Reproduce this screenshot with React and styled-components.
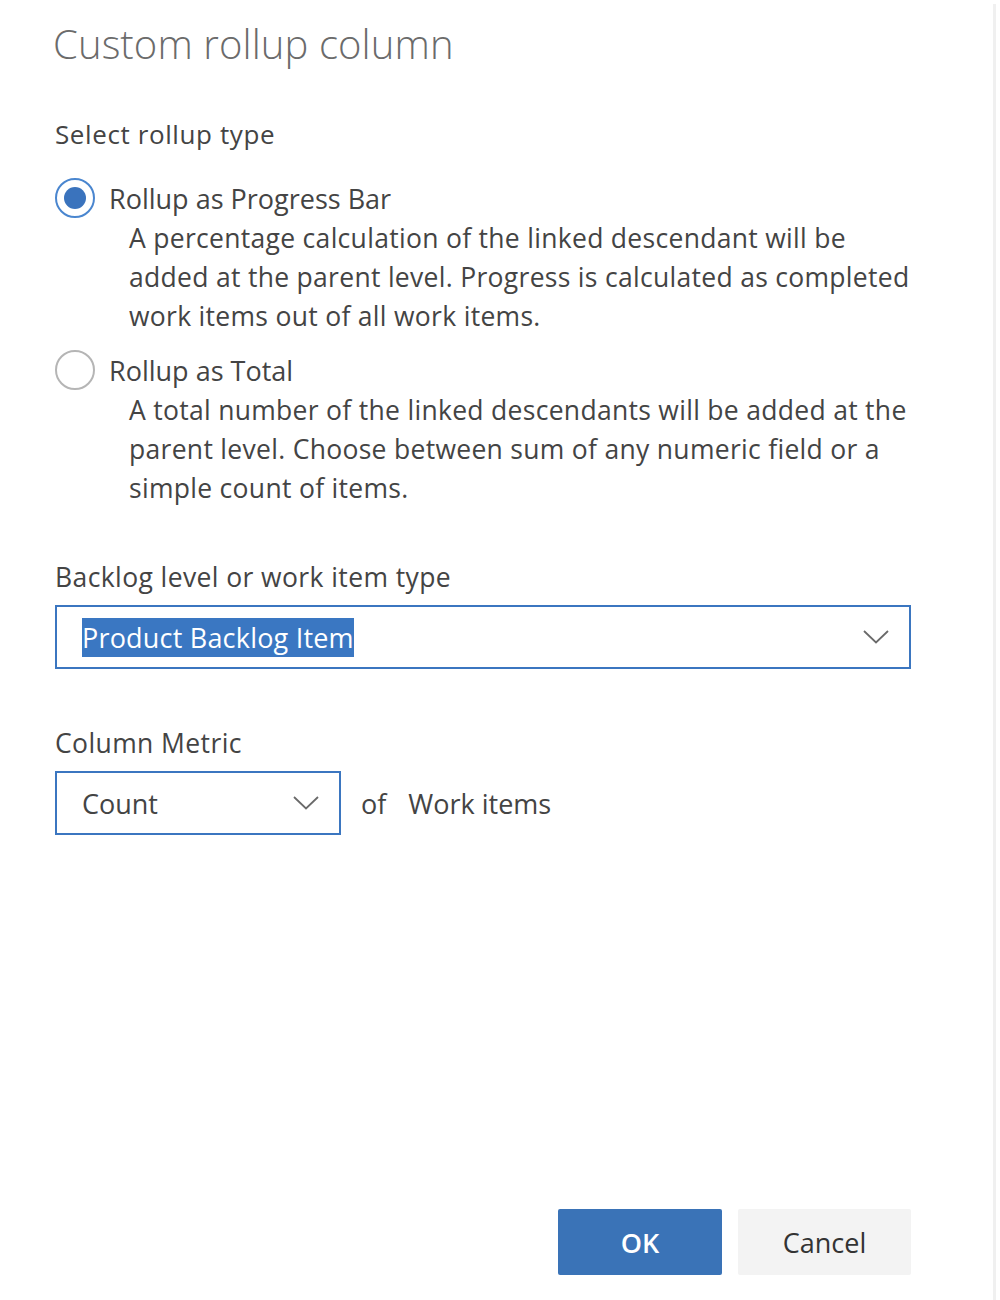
import React, { useState } from 'react'
import styled, { createGlobalStyle } from 'styled-components'

const GlobalStyle = createGlobalStyle`
  html, body {
    margin: 0;
    padding: 0;
    background: #ffffff;
  }
  body {
    font-family: "Open Sans", "Noto Sans", "Liberation Sans", sans-serif;
    color: #3a3a3a;
  }
`

const options = [
  {
    id: 'progress',
    label: 'Rollup as Progress Bar',
    lines: [
      'A percentage calculation of the linked descendant will be',
      'added at the parent level. Progress is calculated as completed',
      'work items out of all work items.'
    ]
  },
  {
    id: 'total',
    label: 'Rollup as Total',
    lines: [
      'A total number of the linked descendants will be added at the',
      'parent level. Choose between sum of any numeric field or a',
      'simple count of items.'
    ]
  }
]

const Chevron = () => (
  <svg width="26" height="14" viewBox="0 0 26 14" fill="none">
    <path d="M1 1 L13 12.5 L25 1" stroke="#6a6a6a" strokeWidth="1.8" />
  </svg>
)

const App = () => {
  const [rollup, setRollup] = useState('progress')

  return (
    <Page>
      <GlobalStyle />
      <Dialog>
        <Title>Custom rollup column</Title>

        <SectionLabel>Select rollup type</SectionLabel>
        <RadioGroup>
          {options.map((opt) => (
            <RadioOption key={opt.id} onClick={() => setRollup(opt.id)}>
              <RadioRow>
                <RadioCircle checked={rollup === opt.id} />
                <RadioLabel>{opt.label}</RadioLabel>
              </RadioRow>
              <Description>
                {opt.lines.map((l) => (
                  <div key={l}>{l}</div>
                ))}
              </Description>
            </RadioOption>
          ))}
        </RadioGroup>

        <FieldLabel spacing={49}>Backlog level or work item type</FieldLabel>
        <Select width="856px">
          <Selected>Product Backlog Item</Selected>
          <Chevron />
        </Select>

        <FieldLabel spacing={54}>Column Metric</FieldLabel>
        <MetricRow>
          <Select width="286px">
            <SelectText>Count</SelectText>
            <Chevron />
          </Select>
          <OfText>of</OfText>
          <OfText>Work items</OfText>
        </MetricRow>

        <Footer>
          <PrimaryButton>OK</PrimaryButton>
          <SecondaryButton>Cancel</SecondaryButton>
        </Footer>
      </Dialog>
    </Page>
  )
}

export default App

const Page = styled.div`
  width: 1000px;
  height: 1300px;
  padding-top: 4px;
  box-sizing: border-box;
`

const Dialog = styled.div`
  box-sizing: border-box;
  width: 996px;
  height: 1296px;
  border-right: 3px solid #f0f0f0;
  padding: 0 0 21px 55px;
  display: flex;
  flex-direction: column;
`

const Title = styled.h1`
  margin: 13px 0 0 -2px;
  font-size: 40px;
  line-height: 54px;
  font-weight: 300;
  color: #6b6b6b;
  letter-spacing: 0.1px;
`

const SectionLabel = styled.div`
  margin-top: 43px;
  font-size: 26px;
  line-height: 40px;
  color: #444;
  letter-spacing: 0.6px;
`

const RadioGroup = styled.div`
  margin-top: 24px;
  display: flex;
  flex-direction: column;
  gap: 14px;
`

const RadioOption = styled.div`
  cursor: pointer;
`

const RadioRow = styled.div`
  display: flex;
  align-items: center;
  gap: 14px;
  height: 40px;
`

const RadioCircle = styled.span`
  box-sizing: border-box;
  width: 40px;
  height: 40px;
  border-radius: 50%;
  border: 2px solid ${(p) => (p.checked ? '#4a86cf' : '#b5b5b5')};
  display: flex;
  align-items: center;
  justify-content: center;
  flex-shrink: 0;

  &::after {
    content: '';
    width: 22px;
    height: 22px;
    border-radius: 50%;
    background: #3a73bd;
    display: ${(p) => (p.checked ? 'block' : 'none')};
  }
`

const RadioLabel = styled.span`
  font-size: 27px;
  color: #444;
`

const Description = styled.div`
  margin-top: 1px;
  margin-left: 74px;
  font-size: 26.5px;
  line-height: 39px;
  color: #444;
  letter-spacing: 0.3px;
`

const FieldLabel = styled.div`
  margin-top: ${(p) => p.spacing}px;
  font-size: 26.5px;
  line-height: 40px;
  color: #444;
  letter-spacing: 0.4px;
  & + div {
    margin-top: 8px;
  }
`

const Select = styled.div`
  box-sizing: border-box;
  width: ${(p) => p.width};
  height: 64px;
  border: 2.5px solid #3b76c0;
  display: flex;
  align-items: center;
  justify-content: space-between;
  padding: 0 20px 0 25px;
  background: #fff;
`

const Selected = styled.span`
  background: #3a77c2;
  color: #fff;
  font-size: 27px;
  line-height: 39px;
  letter-spacing: 0.2px;
`

const SelectText = styled.span`
  font-size: 27px;
  color: #444;
`

const MetricRow = styled.div`
  display: flex;
  align-items: center;
  gap: 20px;
`

const OfText = styled.span`
  font-size: 27px;
  color: #444;
  & + & {
    margin-left: 2px;
  }
`

const Footer = styled.div`
  margin-top: auto;
  margin-bottom: 4px;
  width: 856px;
  display: flex;
  justify-content: flex-end;
  gap: 16px;
`

const BaseButton = styled.button`
  height: 66px;
  border: none;
  border-radius: 2px;
  font-family: inherit;
  font-size: 27px;
  cursor: pointer;
`

const PrimaryButton = styled(BaseButton)`
  width: 164px;
  background: #3a73b7;
  color: #fff;
  font-weight: 600;
`

const SecondaryButton = styled(BaseButton)`
  width: 173px;
  background: #f3f3f3;
  color: #333;
`
